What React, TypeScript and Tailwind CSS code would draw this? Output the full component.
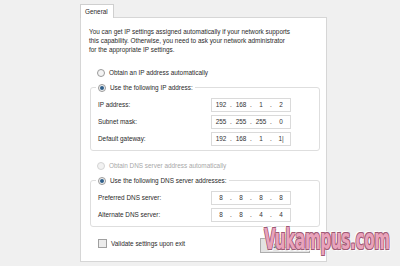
import React from 'react';

const ui = { fontFamily: '"Liberation Sans", Arial, sans-serif' };

function Radio({ checked, disabled }: { checked?: boolean; disabled?: boolean }) {
  return (
    <span
      className={`inline-flex items-center justify-center w-[8px] h-[8px] rounded-full border ${
        disabled ? 'border-[#d4d4d4] bg-[#f2f2f2]' : 'border-[#9a9a9a] bg-[#f4f4f4]'
      }`}
    >
      {checked && <span className="w-[4px] h-[4px] rounded-full bg-[#2f5f8a]" />}
    </span>
  );
}

function IpBox({ parts }: { parts: string[] }) {
  return (
    <div className="w-[80px] h-[14px] border border-[#dadada] bg-white flex items-center px-[1px] text-[#333]">
      {parts.map((p, i) => (
        <React.Fragment key={i}>
          <span className="w-[16px] text-center">{p}</span>
          {i < 3 && <span className="w-[4px] text-center">.</span>}
        </React.Fragment>
      ))}
    </div>
  );
}

function Row({ label, parts }: { label: string; parts: string[] }) {
  return (
    <div className="flex items-center justify-between h-[17px] pl-[7px] pr-[28px]">
      <span>{label}</span>
      <IpBox parts={parts} />
    </div>
  );
}

export default function App() {
  return (
    <div className="w-[400px] h-[266px] bg-[#f0f0f0] relative overflow-hidden text-[6.4px] leading-[9px] text-[#2a2a2a]" style={ui}>
      <div className="pl-[80px] pt-[4px]">
        {/* tab */}
        <div className="w-[34px] h-[14px] border border-b-0 border-[#cfcfcf] bg-white flex items-center pl-[4px] relative z-10">
          General
        </div>
        {/* panel */}
        <div className="w-[247px] h-[245px] -mt-px border border-[#d6d6d6] bg-white px-[8px] pt-[9px]">
          <p>
            You can get IP settings assigned automatically if your network supports
            <br />
            this capability. Otherwise, you need to ask your network administrator
            <br />
            for the appropriate IP settings.
          </p>

          <div className="flex items-center gap-[4px] pl-[8px] mt-[14px]">
            <Radio />
            <span>Obtain an IP address automatically</span>
          </div>

          <fieldset className="ml-[1px] mt-[6px] w-[230px] border border-[#dedede] rounded-[3px] pb-[3px] px-0">
            <legend className="ml-[5px] px-[2px] flex items-center gap-[4px] bg-white">
              <Radio checked />
              <span>Use the following IP address:</span>
            </legend>
            <div className="pt-[4px]">
              <Row label="IP address:" parts={['192', '168', '1', '2']} />
              <Row label="Subnet mask:" parts={['255', '255', '255', '0']} />
              <Row label="Default gateway:" parts={['192', '168', '1', '1|']} />
            </div>
          </fieldset>

          <div className="flex items-center gap-[4px] pl-[8px] mt-[10px] text-[#a8a8a8]">
            <Radio disabled />
            <span>Obtain DNS server address automatically</span>
          </div>

          <fieldset className="ml-[1px] mt-[6px] w-[230px] border border-[#dedede] rounded-[3px] pb-[3px] px-0">
            <legend className="ml-[5px] px-[2px] flex items-center gap-[4px] bg-white">
              <Radio checked />
              <span>Use the following DNS server addresses:</span>
            </legend>
            <div className="pt-[4px]">
              <Row label="Preferred DNS server:" parts={['8', '8', '8', '8']} />
              <Row label="Alternate DNS server:" parts={['8', '8', '4', '4']} />
            </div>
          </fieldset>

          <div className="flex items-center justify-between mt-[7px] pl-[9px] pr-[8px]">
            <div className="flex items-center gap-[4px]">
              <span className="w-[9px] h-[9px] border border-[#a0a0a0] bg-[#ececec]" />
              <span>Validate settings upon exit</span>
            </div>
            <div className="w-[50px] h-[15px] mt-[4px] border border-[#adadad] bg-[#e3e3e3] flex items-center justify-center">
              Advanced...
            </div>
          </div>
        </div>
      </div>

      {/* watermark */}
      <div
        className="absolute left-[264px] top-[222px] text-[28px] leading-[36px] font-bold tracking-[-0.5px] text-[#e9a3bb] [text-shadow:-1px_-1px_0_#9e5a74,1px_-1px_0_#9e5a74,-1px_1px_0_#9e5a74,1px_1px_0_#9e5a74,2px_2px_1px_#ffffff,-2px_-2px_1px_#ffffff] scale-x-[0.6] origin-left whitespace-nowrap"
        style={{ fontFamily: '"DejaVu Sans Condensed", "DejaVu Sans", sans-serif' }}
      >
        Vukampus.com
      </div>
    </div>
  );
}
